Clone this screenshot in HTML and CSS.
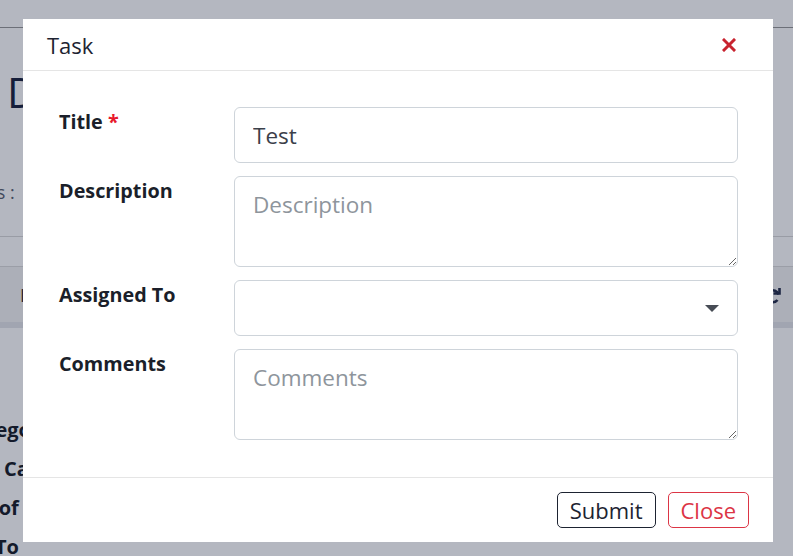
FILE: index.html
```html
<!DOCTYPE html>
<html>
<head>
<meta charset="utf-8">
<link rel="stylesheet" href="styles.css">
</head>
<body>
<div class="page">
  <div class="topbar"></div>
  <h1 class="page-title">Dashboard</h1>
  <div class="meta">Status :<span class="meta-val">Open</span></div>
  <div class="toolbar">
    <span class="tool-text">I</span>
    <svg class="refresh" viewBox="0 0 20 20" width="20" height="20"><path d="M15.5 8.5A6 6 0 1 0 14.5 14" fill="none" stroke="#27304d" stroke-width="2.6"/><path d="M10.5 7.5h6V2" fill="none" stroke="#27304d" stroke-width="2.6"/></svg>
  </div>
  <div class="fields">
    <div class="field-row shift1">Category</div>
    <div class="field-row shift2">Sub Category</div>
    <div class="field-row shift3">Type of</div>
    <div class="field-row shift4">To</div>
  </div>
</div>
<div class="backdrop"></div>
<div class="modal">
  <div class="modal-header">
    <h2 class="modal-title">Task</h2>
    <button class="close-x" aria-label="Close">
      <svg viewBox="0 0 14 14" width="14" height="14"><path d="M2 2L12 12M12 2L2 12" stroke="#c8232f" stroke-width="3" stroke-linecap="square"/></svg>
    </button>
  </div>
  <div class="modal-body">
    <div class="form-row">
      <label class="form-label">Title <span class="req">*</span></label>
      <input class="form-control" type="text" value="Test">
    </div>
    <div class="form-row">
      <label class="form-label">Description</label>
      <textarea class="form-control area" placeholder="Description"></textarea>
    </div>
    <div class="form-row">
      <label class="form-label">Assigned To</label>
      <div class="form-control select">
        <svg class="caret" viewBox="0 0 14 7" width="14" height="7"><path d="M0 0H14L7 7Z" fill="#474c55"/></svg>
      </div>
    </div>
    <div class="form-row">
      <label class="form-label">Comments</label>
      <textarea class="form-control area" placeholder="Comments"></textarea>
    </div>
  </div>
  <div class="modal-footer">
    <button class="btn btn-dark">Submit</button>
    <button class="btn btn-red">Close</button>
  </div>
</div>
</body>
</html>
```
FILE: styles.css
```css
* { box-sizing: border-box; }
html, body { margin: 0; padding: 0; }
body {
  width: 793px;
  height: 556px;
  overflow: hidden;
  background: #ffffff;
  font-family: "Open Sans", "Noto Sans", sans-serif;
  color: #212529;
}
.page { position: relative; height: 556px; }
.topbar { height: 28px; border-bottom: 1px solid #999; background: #fff; }
.page-title {
  margin: 44px 0 0 7px;
  font-size: 42px;
  font-weight: 500;
  color: #1c2540;
  line-height: 40px;
}
.meta {
  margin: 68px 0 0 -47px;
  font-size: 18px;
  color: #5b6270;
  height: 57px;
  border-bottom: 1px solid #d8d8d8;
  white-space: nowrap;
}
.meta-val { margin-left: 16px; }
.toolbar {
  margin-top: 29px;
  height: 62px;
  background: #f4f4f4;
  border-top: 1px solid #dcdcdc;
  border-bottom: 6px solid #e4e6ea;
  display: flex;
  align-items: center;
  justify-content: space-between;
  padding: 0 10px 0 20px;
}
.tool-text { font-size: 18px; color: #333; }
.refresh { margin-top: 2px; }
.fields { margin-top: 88px; font-weight: 700; font-size: 20px; color: #1b1f2a; }
.field-row { height: 39px; white-space: nowrap; }
.shift1 { margin-left: -38px; }
.shift2 { margin-left: -38px; }
.shift3 { margin-left: -54px; }
.shift4 { margin-left: -5px; }

.backdrop {
  position: fixed;
  inset: 0;
  background: rgba(8, 18, 48, 0.3);
}
.modal {
  position: fixed;
  left: 23px;
  top: 19px;
  width: 750px;
  height: 523px;
  background: #fff;
  display: flex;
  flex-direction: column;
}
.modal-header {
  height: 52px;
  border-bottom: 1px solid #e5e5e5;
  display: flex;
  align-items: center;
  justify-content: space-between;
  padding: 0 37px 0 24px;
}
.modal-title {
  margin: 0;
  font-size: 22px;
  font-weight: 400;
  color: #1d2331;
}
.close-x {
  border: 0;
  background: none;
  padding: 0;
  display: flex;
  margin-top: 1px;
}
.modal-body {
  flex: 1;
  padding: 36px 35px 0 36px;
  display: flex;
  flex-direction: column;
  gap: 13px;
}
.form-row { display: flex; align-items: flex-start; }
.form-label {
  width: 175px;
  flex: none;
  font-size: 19.8px;
  font-weight: 700;
  color: #1b1f2a;
  line-height: 24px;
  padding-top: 3px;
}
.req { color: #e8192c; }
.form-control {
  flex: 1;
  height: 56px;
  border: 1px solid #ced4da;
  border-radius: 6px;
  font-family: inherit;
  font-size: 22.5px;
  color: #3b404a;
  padding: 0 18px;
  background: #fff;
  outline: none;
}
.area {
  height: 91px;
  padding-top: 12px;
  resize: vertical;
}
.area::placeholder { color: #8e959c; }
.select {
  display: flex;
  align-items: center;
  justify-content: flex-end;
  padding-right: 18px;
}
.modal-footer {
  height: 65px;
  border-top: 1px solid #e5e5e5;
  display: flex;
  align-items: center;
  justify-content: flex-end;
  gap: 12px;
  padding: 0 24px 0 0;
}
.btn {
  height: 36px;
  font-family: inherit;
  font-size: 22px;
  background: #fff;
  border-radius: 5px;
  padding: 0 12px;
  line-height: 1;
}
.btn-dark { border: 1px solid #1d2331; color: #1d2331; }
.btn-red { border: 1px solid #dc3545; color: #dc3545; }
```
